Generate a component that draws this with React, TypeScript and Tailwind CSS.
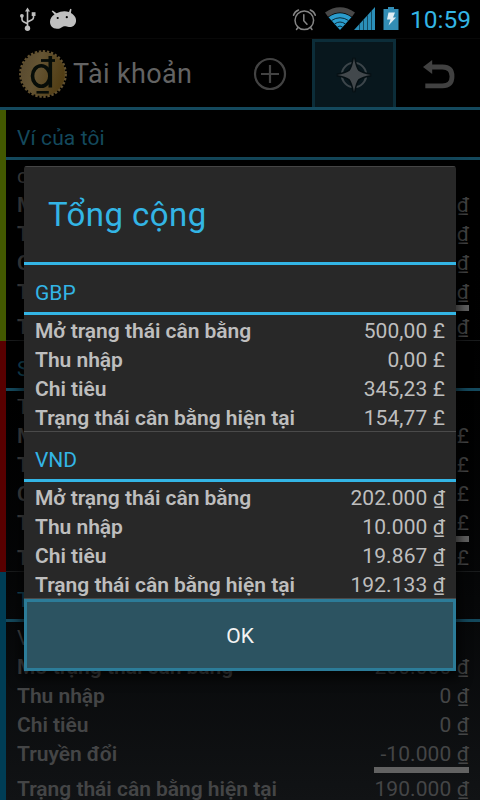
import React from "react";

type Row = [string, string];

const LABELS = {
  opening: "Mở trạng thái cân bằng",
  income: "Thu nhập",
  expense: "Chi tiêu",
  transfer: "Truyền đổi",
  current: "Trạng thái cân bằng hiện tại",
};

interface Account {
  name: string;
  note: string;
  stripe: string;
  rows: Row[];
  current: string;
}

const ACCOUNTS: Account[] = [
  {
    name: "Ví của tôi",
    note: "chung",
    stripe: "bg-[#425800]",
    rows: [
      [LABELS.opening, "2.000 ₫"],
      [LABELS.income, "10.000 ₫"],
      [LABELS.expense, "19.867 ₫"],
      [LABELS.transfer, "10.000 ₫"],
    ],
    current: "2.133 ₫",
  },
  {
    name: "Sterling",
    note: "Tài khoản",
    stripe: "bg-[#580000]",
    rows: [
      [LABELS.opening, "500,00 £"],
      [LABELS.income, "0,00 £"],
      [LABELS.expense, "345,23 £"],
      [LABELS.transfer, "0,00 £"],
    ],
    current: "154,77 £",
  },
  {
    name: "Tiết kiệm",
    note: "VND",
    stripe: "bg-[#003d55]",
    rows: [
      [LABELS.opening, "200.000 ₫"],
      [LABELS.income, "0 ₫"],
      [LABELS.expense, "0 ₫"],
      [LABELS.transfer, "-10.000 ₫"],
    ],
    current: "190.000 ₫",
  },
];

const TOTALS: { currency: string; rows: Row[] }[] = [
  {
    currency: "GBP",
    rows: [
      [LABELS.opening, "500,00 £"],
      [LABELS.income, "0,00 £"],
      [LABELS.expense, "345,23 £"],
      [LABELS.current, "154,77 £"],
    ],
  },
  {
    currency: "VND",
    rows: [
      [LABELS.opening, "202.000 ₫"],
      [LABELS.income, "10.000 ₫"],
      [LABELS.expense, "19.867 ₫"],
      [LABELS.current, "192.133 ₫"],
    ],
  },
];

function Line({ row }: { row: Row }) {
  return (
    <div className="flex h-[29px] justify-between whitespace-nowrap px-[11px] pt-[2px] text-[21px] leading-[29px]">
      <span className="font-semibold tracking-[-0.03px]">{row[0]}</span>
      <span className="tracking-[0.1px]">{row[1]}</span>
    </div>
  );
}

function StatusBar() {
  return (
    <div className="flex h-[38px] shrink-0 items-center bg-black">
      <svg className="ml-[19px] h-[38px] w-[18px]" viewBox="19 0 18 38" fill="none" stroke="#bebebe" strokeWidth="1.6">
        <path d="M27.5 10v18M22 17v2.500q0 1.500 1.500 2.200l4 2M33.500 15v2.500q0 1.500-1.500 2.200l-4 2" />
        <path d="M25 11.500l2.500-4 2.500 4z" fill="#bebebe" stroke="none" />
        <circle cx="27.500" cy="28.300" r="2.700" fill="#bebebe" stroke="none" />
        <circle cx="21.900" cy="15.800" r="1.900" fill="#bebebe" stroke="none" />
        <path d="M31.700 12.200h3.800v3.800h-3.800z" fill="#bebebe" stroke="none" />
      </svg>
      <svg className="ml-[12px] h-[38px] w-[28px]" viewBox="49 0 28 38">
        <path d="M54.500 14.500L51.700 11.300l1-.7 3.800 2.700Q63 10 69 12l1.200-3.200 1.300.4-.6 3.800C74.500 15 76.500 18 76 21.500c-.6 4-4 6-7 5.500-2-.3-3-.9-5-.7-2 .3-3 2.700-7 2.500-4.500-.2-7-3-7-7 0-3 2-5.800 4.500-7.300z" fill="#c0c0c0" />
        <circle cx="57.700" cy="18" r="1.100" fill="#000" />
        <circle cx="66.800" cy="17.200" r="1.100" fill="#000" />
      </svg>
      <div className="grow" />
      <svg className="h-[38px] w-[110px]" viewBox="290 0 110 38">
        <g fill="none" stroke="#858585" strokeWidth="1.500" strokeLinecap="round">
          <circle cx="304.300" cy="20.300" r="9.300" />
          <path d="M303.800 14.800v6l3.200 3.500M293.500 15.200q1-3.500 5-5.200M310.300 10q4 1.700 5 5.200M298 27.500l-1.500 2M310.500 27.500l1.500 2" />
        </g>
        <path d="M325 12.500Q340 2 355 12.500l-3 4.300Q340 8 328 16.800z" fill="#484848" />
        <path d="M328.500 17.300Q340 9 351.500 17.300L340 30z" fill="#2b9ccc" />
        <g fill="none" stroke="#0b2b39" strokeWidth="1">
          <path d="M331.500 20.500q8.500-5.500 17 0M334.500 24q5.500-4 11 0M337.500 27q2.500-2 5 0" />
        </g>
        <path d="M354 30L375 7v23z" fill="#2b8fb9" />
        <path d="M359.500 24v6M363.500 20v10M367.500 15v15M371.500 11v19" stroke="#144c64" strokeWidth="1" />
        <path d="M383.500 9h4.500V7h6v2h4.500v21h-15z" fill="#328db5" />
        <path d="M388.500 12.500h6.500l-2 5h3l-7.500 8 2-6h-3.500z" fill="#e0eef4" />
      </svg>
      <span className="ml-[10px] mr-[8px] w-[62px] whitespace-nowrap pt-[2px] text-[24.500px] leading-[38px] text-[#33b5e5]">10:59</span>
    </div>
  );
}

function ActionBar() {
  return (
    <div className="flex h-[72px] shrink-0 items-center border-b-[3px] border-[#14495d] border-t border-t-[#080808] bg-black">
      <svg className="ml-[18px] mt-[2px] h-[50px] w-[50px]" viewBox="0 0 50 50">
        <defs>
          <linearGradient id="coin" x1="0" x2="1" y1="0" y2="0.300">
            <stop offset="0" stopColor="#56482f" />
            <stop offset="0.450" stopColor="#645433" />
            <stop offset="1" stopColor="#523e15" />
          </linearGradient>
        </defs>
        <circle cx="25" cy="25" r="22.300" fill="url(#coin)" />
        <circle cx="25" cy="25" r="22.800" fill="none" stroke="#62512f" strokeWidth="2.200" strokeDasharray="2.400 1.700" />
        <g fill="none" stroke="#070d08" strokeWidth="3.600">
          <ellipse cx="23.200" cy="27" rx="8.700" ry="10.300" />
          <path d="M32.300 7v31.500" />
          <path d="M23 11.500h14" strokeWidth="2.800" />
          <path d="M18.500 43.300h12.300" strokeWidth="2.600" />
        </g>
      </svg>
      <span className="ml-[5px] mt-[2px] w-[155px] whitespace-nowrap text-[27px] leading-[32px] tracking-[0.35px] text-[#636363]">Tài khoản</span>
      <div className="flex h-full w-[84px] items-center justify-center pt-[2px]">
        <svg className="h-[34px] w-[34px]" viewBox="0 0 34 34" fill="none" stroke="#434343" strokeWidth="2.200">
          <circle cx="17" cy="17" r="15" />
          <path d="M17 8v18M8 17h18" />
        </svg>
      </div>
      <div className="flex h-full w-[84px] items-center justify-center border-x-[3px] border-t-[3px] border-[#0c2d39] bg-[#08171d]">
        <svg className="h-[36px] w-[36px]" viewBox="0 0 36 36">
          <circle cx="18" cy="18" r="12.200" fill="none" stroke="#3c454a" strokeWidth="2.100" />
          <path d="M18 1Q19.500 10 22.300 13.700Q26 16.500 35 18Q26 19.500 22.300 22.300Q19.500 26 18 35Q16.500 26 13.700 22.300Q10 19.500 1 18Q10 16.500 13.700 13.700Q16.500 10 18 1z" fill="#42484c" stroke="#050f13" strokeWidth="3" paintOrder="stroke" />
        </svg>
      </div>
      <div className="flex h-full grow items-center justify-center">
        <svg className="ml-[2px] mt-[2px] h-[32px] w-[34px]" viewBox="0 0 34 32">
          <path d="M9 9h11.500q9.500 0 9.500 9.400T20.500 27.800H3.300" fill="none" stroke="#414141" strokeWidth="4.800" />
          <path d="M1 9L10.200 2v14z" fill="#414141" />
        </svg>
      </div>
    </div>
  );
}

function AccountItem({ account }: { account: Account }) {
  return (
    <div className="flex h-[231px] shrink-0">
      <div className={`w-[6px] shrink-0 ${account.stripe}`} />
      <div className="grow border-b border-[#191b1c] text-[#444546]">
        <div className="h-[50px] border-b-[3px] border-[#14495d] pl-[11px] pt-[14px] text-[21px] leading-[29px] tracking-[0.1px] text-[#14495d]">
          {account.name}
        </div>
        <div className="h-[29px] px-[11px] pt-[2px] text-[21px] leading-[29px]">{account.note}</div>
        {account.rows.map((row) => (
          <Line key={row[0]} row={row} />
        ))}
        <div className="mr-[11px] ml-auto h-[6px] w-[95px] bg-[#626262]" />
        <Line row={[LABELS.current, account.current]} />
      </div>
    </div>
  );
}

function TotalsDialog() {
  return (
    <div className="absolute left-[24px] top-[166px] w-[432px] overflow-hidden rounded-t-[3px] bg-[#282828] text-[#bebebe] shadow-[0_4px_12px_4px_rgba(0,0,0,0.6)]">
      <div className="flex h-[99px] items-center border-b-[3px] border-t border-[#33b5e5] border-t-[#454545] pl-[24px] text-[33px] leading-[40px] tracking-[0.45px] text-[#33b5e5]">
        Tổng cộng
      </div>
      {TOTALS.map((total) => (
        <div key={total.currency} className="border-b border-[#4a4a4a]">
          <div className="h-[50px] border-b-[3px] border-[#33b5e5] pl-[11px] pt-[14px] text-[21px] leading-[29px] text-[#33b5e5]">
            {total.currency}
          </div>
          {total.rows.map((row) => (
            <Line key={row[0]} row={row} />
          ))}
        </div>
      ))}
      <button className="flex h-[72px] w-full items-center justify-center border-[3px] border-[#2c7c99] bg-[#2c5361] pt-[3px] text-[21px] text-[#f3f3f3]">
        OK
      </button>
    </div>
  );
}

export default function App() {
  return (
    <div className="relative flex h-[800px] w-[480px] flex-col overflow-hidden bg-linear-to-b from-black from-20% to-[#111315] font-['Roboto','Noto_Sans',sans-serif]">
      <StatusBar />
      <ActionBar />
      {ACCOUNTS.map((account) => (
        <AccountItem key={account.name} account={account} />
      ))}
      <TotalsDialog />
    </div>
  );
}
